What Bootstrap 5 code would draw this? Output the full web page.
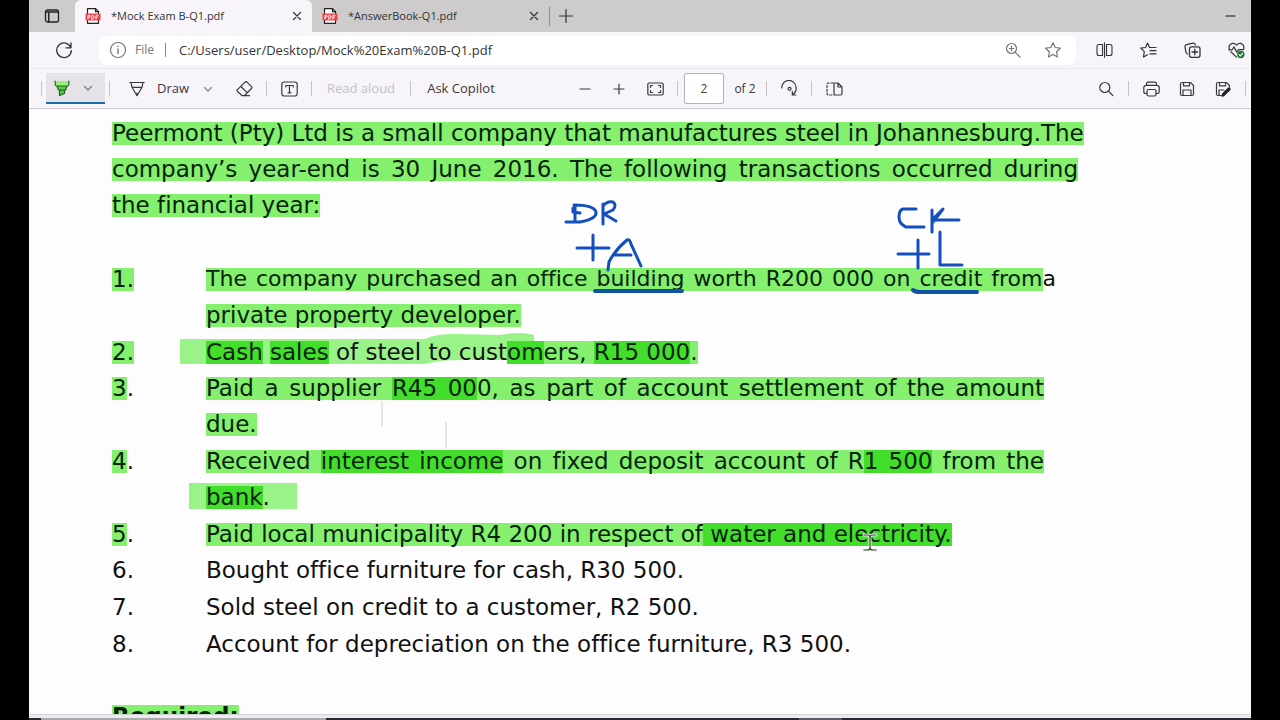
<!DOCTYPE html>
<html lang="en">
<head>
<meta charset="utf-8">
<meta name="viewport" content="width=device-width, initial-scale=1">
<title>Mock Exam B-Q1.pdf</title>
<link href="https://cdn.jsdelivr.net/npm/bootstrap@5.3.0/dist/css/bootstrap.min.css" rel="stylesheet">
<style>
  body { background: #000; font-family: "Open Sans", "Noto Sans", sans-serif; font-size: 12px; color: #333; }
  .browser { margin: 0 29px; background: #f7f5fa; }
  svg { display: block; fill: none; stroke: currentColor; stroke-width: 1.2; stroke-linecap: round; stroke-linejoin: round; flex: none; }
  button { background: none; border: 0; padding: 0; color: inherit; }

  .tab-strip { height: 32px; background: #cdcbcc; }
  .strip-btn { width: 46px; }
  .tab-item { width: 237px; padding: 0 7px 0 10px; gap: 10px; font-size: 11px; color: #333; }
  .tab-item a { color: inherit; }
  .tab-item.current { background: #f7f5fa; border-radius: 6px 6px 0 0; }
  .tab-sep { width: 1px; height: 19px; background: #8d8b8d; }

  .address-row { height: 37px; border-bottom: 1px solid #eceaee; }
  .reload { width: 70px; }
  .address-box { height: 29px; background: #fff; border-radius: 8px; padding: 0 15px 0 10px; margin-right: 12px; }
  .address-box input { border: 0; outline: 0; padding: 1px 0 0; background: none; font-size: 13px; color: #333; min-width: 0; }
  .address-icons { gap: 24px; color: #77757a; }
  .file-chip { color: #77757a; font-size: 12px; gap: 8px; }
  .file-chip .tab-sep { height: 14px; margin: 0 13px 0 3px; }
  .address-tools { gap: 12px; }
  .slot { width: 32px; height: 32px; }
  .overrun { margin-right: -1px; }

  .pdf-bar { height: 40px; border-bottom: 1px solid #cfcdd2; padding: 0 1px 0 8px; color: #3a383c; font-size: 13px; }
  .rule { width: 1px; height: 15px; background: #c4c2c7; margin: 0 6px; flex: none; }
  .rule.tight { margin: 0 4px; }
  .pen-btn { width: 59px; height: 31px; background: #e5e3e7; border-bottom: 2px solid #1b6aa5; padding: 0 12px 0 8px; }
  .draw-btn { width: 98px; padding: 0 7px; margin-left: 8px; margin-right: 8px; gap: 12px; }
  .aloud-btn { width: 86px; color: #c3c1c6; }
  .ask-btn { width: 88px; margin-right: 64px; }
  .zoom-in { margin: 0 4px 0 2px; }
  .page-box { width: 40px; height: 31px; border: 1px solid #b5b3b8; border-radius: 2px; text-align: center; font-size: 12px; color: #444; background: #fff; }
  .page-total { width: 42px; font-size: 12px; }

  .sheet { background: #fdfdfd; color: #111; font-family: "DejaVu Sans", Verdana, sans-serif; font-variant-ligatures: none; font-size: 23px; line-height: 36px; padding: 6px 0 0 83px; z-index: 0; }
  .sheet p, .sheet ol { margin: 0; padding: 0; }
  .sheet .intro { width: 966px; margin-bottom: 38px; }
  .ln { display: block; white-space: nowrap; }
  .full { text-align-last: justify; }
  .ol-num { width: 94px; flex: none; }
  .ol-text { width: 838px; }
  .ol-text .wide { width: 850px; font-size: 22px; }
  .one-more { margin-bottom: 1px; }
  .hl { background: linear-gradient(#85ef6e, #85ef6e) 0 2px / 100% 23px no-repeat; }
  .hl2 { background: linear-gradient(#43de2b, #43de2b) 0 2px / 100% 23px no-repeat; }
  .hl, .hl2 { color: #06240a; }
  .sheet .required { margin-top: 36px; font-weight: 700; }
  .layer { left: 0; top: 0; pointer-events: none; }
  .bands { z-index: -1; }

  .scroll-strip { height: 4px; background: #ececef; border-top: 1px solid #d2d3d8; }
  .task-strip { height: 2px; background: #262a33; }
  .task-strip .lit { width: 285px; margin-left: 12px; background: #aaa9ad; }
  .task-strip .dim { width: 43px; margin-left: 473px; background: #5d5f68; }
</style>
</head>
<body>
<div class="browser d-flex flex-column vh-100 overflow-hidden">
  <div class="tab-strip d-flex align-items-center flex-shrink-0">
    <button class="strip-btn d-flex justify-content-center" aria-label="Tab actions">
      <svg width="16" height="16" viewBox="0 0 16 16"><rect x="1.500" y="2" width="13" height="12" rx="2" stroke="#222" stroke-width="1.300"/><path d="M2 4h12M4.700 5v9" stroke="#222" stroke-width="1.500"/></svg>
    </button>
    <div class="tab-item current d-flex align-items-center h-100">
      <svg width="16" height="16" viewBox="0 0 16 16"><path d="M2.500.7h8l3 3v11.600h-11z" fill="#fff" stroke="#222"/><path d="M10.500.7v3h3" stroke="#222"/><rect x=".5" y="5.500" width="15" height="7" rx="1" fill="#e8434b" stroke="none"/><path d="M3 11V7.300h1.200q1 0 1 1t-1 1H3M6.800 11V7.300h.8q1.400 0 1.400 1.800T7.600 11zM11 11V7.300h2M11 9.200h1.700" stroke="#fff" stroke-width=".9"/></svg>
      <a href="#" class="text-decoration-none flex-grow-1">*Mock Exam B-Q1.pdf</a>
      <button aria-label="Close tab"><svg width="16" height="16" viewBox="0 0 16 16"><path d="M4.500 4.500l7 7M11.500 4.500l-7 7"/></svg></button>
    </div>
    <div class="tab-item d-flex align-items-center h-100">
      <svg width="16" height="16" viewBox="0 0 16 16"><path d="M2.500.7h8l3 3v11.600h-11z" fill="#fff" stroke="#222"/><path d="M10.500.7v3h3" stroke="#222"/><rect x=".5" y="5.500" width="15" height="7" rx="1" fill="#e8434b" stroke="none"/><path d="M3 11V7.300h1.200q1 0 1 1t-1 1H3M6.800 11V7.300h.8q1.400 0 1.400 1.800T7.600 11zM11 11V7.300h2M11 9.200h1.700" stroke="#fff" stroke-width=".9"/></svg>
      <a href="#" class="text-decoration-none flex-grow-1">*AnswerBook-Q1.pdf</a>
      <button aria-label="Close tab"><svg width="16" height="16" viewBox="0 0 16 16"><path d="M4.500 4.500l7 7M11.500 4.500l-7 7"/></svg></button>
    </div>
    <span class="tab-sep"></span>
    <button class="slot d-flex align-items-center justify-content-center" aria-label="New tab"><svg width="16" height="16" viewBox="0 0 16 16"><path d="M8 1.500v13M1.500 8h13"/></svg></button>
    <button class="slot ms-auto me-1 d-flex align-items-center justify-content-center" aria-label="Minimize"><svg width="12" height="12" viewBox="0 0 12 12"><path d="M1 6h9" stroke="#111"/></svg></button>
  </div>

  <div class="address-row d-flex align-items-center flex-shrink-0">
    <button class="reload d-flex justify-content-center" aria-label="Refresh"><svg width="18" height="18" viewBox="0 0 18 18"><path d="M15.800 6.600A7.300 7.300 0 1 0 16.300 9.600M16 1.800v5h-5" stroke-width="1.300"/></svg></button>
    <div class="address-box d-flex align-items-center flex-grow-1">
      <div class="file-chip d-flex align-items-center">
        <svg width="18" height="18" viewBox="0 0 18 18"><circle cx="9" cy="9" r="7.500"/><path d="M9 8v4.500M9 5.300v.2" stroke-width="1.400"/></svg>
        <label for="url">File</label><span class="tab-sep"></span>
      </div>
      <input id="url" class="flex-grow-1" value="C:/Users/user/Desktop/Mock%20Exam%20B-Q1.pdf">
      <div class="address-icons d-flex">
        <svg width="16" height="16" viewBox="0 0 16 16"><circle cx="6.500" cy="6.500" r="5"/><path d="M10.300 10.300l4.700 4.700M6.500 4.300v4.400M4.300 6.500h4.400"/></svg>
        <svg width="16" height="16" viewBox="0 0 16 16"><path d="M8 .8l2.200 4.700 5.200.7-3.800 3.600.9 5.200L8 12.500 3.500 15l.9-5.200L.6 6.200l5.200-.7z"/></svg>
      </div>
    </div>
    <div class="address-tools d-flex overrun">
      <button class="slot d-flex align-items-center justify-content-center" aria-label="Split screen"><svg width="17" height="16" viewBox="0 0 17 16"><path d="M6.500 2.500H3q-2 0-2 2v7q0 2 2 2h3.500zM10.500 2.500H14q2 0 2 2v7q0 2-2 2h-3.500zM8.500.8v14.400" stroke-width="1.100"/></svg></button>
      <button class="slot d-flex align-items-center justify-content-center" aria-label="Favorites"><svg width="17" height="16" viewBox="0 0 17 16"><path d="M9.500 5.500L7.500 1 5.600 5.500.8 6.200l3.500 3.500-.8 5.300 4-2.200M9.500 5.500h6.500M10 8.700h6M10 11.900h6"/></svg></button>
      <button class="slot d-flex align-items-center justify-content-center" aria-label="Collections"><svg width="17" height="16" viewBox="0 0 17 16"><path d="M3.500 11.800q-1.300-.2-1.500-1.500L1 4.800q-.3-1.800 1.500-2.200l6.500-1.400q1.800-.3 2.300 1.800"/><rect x="5.500" y="4.800" width="10.500" height="10.500" rx="2" stroke-width="1.300"/><path d="M10.800 7.200v5.600M8 10h5.600" stroke-width="1.300"/></svg></button>
      <button class="slot d-flex align-items-center justify-content-center" aria-label="Browser essentials"><svg width="17" height="17" viewBox="0 0 17 17"><path d="M1.500 7.500q-1.200-2.700.6-4.800Q5.200 0 8.500 3q3.300-3 6.300-.3 1.800 2 .7 4.800M2.800 9.800l5.700 5.300M.8 7.800h3.400l1.800-2.900 2.800 5.300 1.800-2.500h5"/><circle cx="12.800" cy="12.500" r="3.700" fill="#1f7a35" stroke="none"/><path d="M11.200 12.700l1.200 1.100 2-2.300" stroke="#fff"/></svg></button>
    </div>
  </div>

  <div class="pdf-bar d-flex align-items-center flex-shrink-0">
    <span class="rule tight"></span>
    <button class="pen-btn d-flex align-items-center justify-content-between" aria-label="Highlight"><svg width="16" height="16" viewBox="0 0 16 16"><path d="M1.500 1v5h13V1z" fill="#9af07f" stroke="none"/><path d="M3 6l1.500 4h7L13 6zM5.500 10.500v5l5-2v-3z" fill="#4fcf45" stroke="none"/><path d="M1.200 1v3.500q0 1.500 1.500 1.500h10.600q1.500 0 1.500-1.500V1M3 6.200l1.300 3.300q.2.700 1 .7h5.400q.8 0 1-.7L13 6.200M5.500 10.500v5l5-2v-3" stroke="#25651f"/></svg>
      <svg width="10" height="10" viewBox="0 0 10 10"><path d="M1.500 3.500L5 7l3.500-3.500" stroke="#777"/></svg></button>
    <span class="rule tight"></span>
    <button class="draw-btn d-flex align-items-center"><svg width="16" height="16" viewBox="0 0 16 16"><path d="M.8 1.500h14.400M2 1.500l1 4.800h10l1-4.800M3 6.300l5 8.400 5-8.400M8 12v2.500"/></svg><span>Draw</span><svg class="ms-auto" width="10" height="10" viewBox="0 0 10 10"><path d="M1.500 3.500L5 7l3.500-3.500" stroke="#888"/></svg></button>
    <button class="slot d-flex align-items-center justify-content-center" aria-label="Erase"><svg width="17" height="16" viewBox="0 0 17 16"><path d="M1.500 8.700L9 1.200q1-.9 2 0l4.500 4.500q.8.900 0 1.800L8.500 14.500H6L1.500 10.500q-.8-.9 0-1.800zM5 5.500l6.200 6.200M6 14.700h7.500"/></svg></button>
    <span class="rule"></span>
    <button class="slot d-flex align-items-center justify-content-center" aria-label="Add text"><svg width="17" height="16" viewBox="0 0 17 16"><rect x=".8" y="1" width="15.400" height="14" rx="2.500"/><path d="M4.800 6V4.500h7.400V6M8.500 4.500v7.300M7 11.800h3"/></svg></button>
    <span class="rule"></span>
    <button class="aloud-btn" disabled>Read aloud</button>
    <span class="rule"></span>
    <button class="ask-btn">Ask Copilot</button>
    <button class="slot d-flex align-items-center justify-content-center" aria-label="Zoom out"><svg width="12" height="12" viewBox="0 0 12 12"><path d="M1 6h10"/></svg></button>
    <button class="slot zoom-in d-flex align-items-center justify-content-center" aria-label="Zoom in"><svg width="12" height="12" viewBox="0 0 12 12"><path d="M1 6h10M6 1v10"/></svg></button>
    <button class="slot d-flex align-items-center justify-content-center" aria-label="Fit to page"><svg width="17" height="14" viewBox="0 0 17 14"><rect x=".8" y="1" width="15.400" height="12" rx="1.500"/><path d="M3.500 5.500v-2h2M11.500 3.500h2v2M13.500 8.500v2h-2M5.500 10.500h-2v-2"/></svg></button>
    <span class="rule"></span>
    <input class="page-box" aria-label="Page" value="2"><span class="page-total text-center">of 2</span>
    <span class="rule ms-0"></span>
    <button class="slot d-flex align-items-center justify-content-center" aria-label="Rotate"><svg width="17" height="17" viewBox="0 0 17 17"><path d="M.8 8A7 7 0 0 1 15 7q.9 5-3.500 7.500M11.300 11.300v3.700h3.500"/><circle cx="8.500" cy="8.800" r="1.500"/></svg></button>
    <span class="rule"></span>
    <button class="slot d-flex align-items-center justify-content-center" aria-label="Page view"><svg width="17" height="14" viewBox="0 0 17 14"><path d="M7 1H2.500Q1 1 1 2.500v9Q1 13 2.500 13H7" stroke-dasharray="2 1.800"/><path d="M8 1h4l4 4v6.500q0 1.500-1.500 1.500H8zM12 1v4h4"/></svg></button>
    <button class="slot ms-auto d-flex align-items-center justify-content-center" aria-label="Search"><svg width="16" height="16" viewBox="0 0 16 16"><circle cx="6.800" cy="6.500" r="5"/><path d="M10.500 10.200l4.300 4.300"/></svg></button>
    <span class="rule"></span>
    <button class="slot d-flex align-items-center justify-content-center" aria-label="Print"><svg width="17" height="16" viewBox="0 0 17 16"><path d="M3.500 4.300V3q0-1.800 1.800-1.800h6.400q1.800 0 1.800 1.800v1.300M4 12.500H2.500q-1.700 0-1.700-1.700V6.500q0-2.200 2.200-2.200h11q2.200 0 2.200 2.200v4.300q0 1.700-1.700 1.700H13"/><rect x="4" y="8.500" width="9" height="6.500" rx="1.500"/></svg></button>
    <button class="slot ms-1 d-flex align-items-center justify-content-center" aria-label="Save"><svg width="16" height="16" viewBox="0 0 16 16"><path d="M3 1.500h8.500l3 3V13q0 1.500-1.500 1.500H3Q1.500 14.500 1.500 13V3Q1.500 1.500 3 1.500zM4.500 1.500v3.300h6V1.500M4 14.500V9h8v5.500"/></svg></button>
    <button class="slot ms-1 d-flex align-items-center justify-content-center" aria-label="Save as"><svg width="17" height="16" viewBox="0 0 17 16"><path d="M7 14.500H3Q1.500 14.500 1.500 13V3Q1.500 1.500 3 1.500h8.500l3 3V6M4.500 1.500v3.300h6V1.500M4 14.500V9h5"/><path d="M8.500 13.500l5.500-5.500" stroke="#222" stroke-width="3.200"/><path d="M7 15.200l1.500-.5" stroke="#222"/></svg></button>
    <span class="rule me-1"></span>
  </div>

  <main class="sheet position-relative flex-grow-1 overflow-hidden">
    <svg class="layer bands position-absolute" width="1222" height="605" viewBox="29 109 1222 605">
      <g fill="#9af388" stroke="none">
        <path d="M180 339H425Q435 334 455 334L500 335Q520 331 534 335V360H460Q440 360 425 364H180z"/>
        <path d="M189 483H297V509H189z"/>
      </g>
      <path d="M382 402v24M446 422v26" stroke="#cfe0c4"/>
    </svg>
    <p class="intro">
      <span class="ln full"><span class="hl">Peermont (Pty) Ltd is a small company that manufactures steel in Johannesburg.The</span></span>
      <span class="ln full"><span class="hl">company’s year-end is 30 June 2016. The following transactions occurred during</span></span>
      <span class="ln"><span class="hl">the financial year:</span></span>
    </p>
    <ol class="list-unstyled">
      <li class="d-flex one-more"><span class="ol-num"><span class="hl">1.</span></span><div class="ol-text"><span class="ln full wide"><span class="hl">The company purchased an office building worth R200 000 on credit from</span>a</span><span class="ln"><span class="hl">private property developer.</span></span></div></li>
      <li class="d-flex"><span class="ol-num"><span class="hl">2.</span></span><div class="ol-text"><span class="ln"><span class="hl2">Cash</span> <span class="hl2">sales</span> of steel to cust<span class="hl"><span class="hl2">om</span>ers, <span class="hl2">R15 000</span>.</span></span></div></li>
      <li class="d-flex one-more"><span class="ol-num"><span class="hl">3</span>.</span><div class="ol-text"><span class="ln full"><span class="hl">Paid a supplier <span class="hl2">R45 00</span>0, as part of account settlement of the amount</span></span><span class="ln"><span class="hl">due.</span></span></div></li>
      <li class="d-flex one-more"><span class="ol-num"><span class="hl">4</span>.</span><div class="ol-text"><span class="ln full"><span class="hl">Received <span class="hl2">interest income</span> on fixed deposit account of R<span class="hl2">1 500</span> from the</span></span><span class="ln"><span class="hl2">bank</span>.</span></div></li>
      <li class="d-flex"><span class="ol-num"><span class="hl">5</span>.</span><div class="ol-text"><span class="ln"><span class="hl">Paid local municipality R4 200 in respect of<span class="hl2"> water and electricity.</span></span></span></div></li>
      <li class="d-flex one-more"><span class="ol-num">6.</span><div class="ol-text"><span class="ln">Bought office furniture for cash, R30 500.</span></div></li>
      <li class="d-flex one-more"><span class="ol-num">7.</span><div class="ol-text"><span class="ln">Sold steel on credit to a customer, R2 500.</span></div></li>
      <li class="d-flex"><span class="ol-num">8.</span><div class="ol-text"><span class="ln">Account for depreciation on the office furniture, R3 500.</span></div></li>
    </ol>
    <p class="required"><span class="hl text-decoration-underline">Required:</span></p>

    <svg class="layer position-absolute" width="1222" height="605" viewBox="29 109 1222 605">
      <g stroke="#1450bd" stroke-width="3">
        <path d="M575 206V221M566 222H580Q597 219 596 212 594 205 574 205M573 208V212L580 213M603 204V224M603 206Q607 201 613 202 617 205 613 210L604 214 616 221"/>
        <path d="M593 235V260M577 248H609M608 270L609 262Q615 250 627 240 630 239 631 244L641 266M615 255H631"/>
        <path d="M916 209H903Q899 210 899 217 899 224 906 227H924M932 210V232M932 220L943 209 933 222M934 220H959"/>
        <path d="M918 240V268M898 254H929M940 232V265H962"/>
        <path d="M595 291H682M913 290Q915 292 920 292H977" stroke="#1052a5" stroke-width="4"/>
      </g>
      <path d="M864 535h4q2 0 2 3v10q0 2-3 2h-3M876 535h-4q-2 0-2 3v10q0 2 3 2h3" stroke="#e8f5e4" stroke-width="3"/>
      <path d="M864 535h4q2 0 2 3v10q0 2-3 2h-3M876 535h-4q-2 0-2 3v10q0 2 3 2h3" stroke="#364333"/>
    </svg>
  </main>
  <div class="scroll-strip flex-shrink-0"></div>
  <div class="task-strip d-flex flex-shrink-0"><span class="lit"></span><span class="dim"></span></div>
</div>
<script src="https://cdn.jsdelivr.net/npm/bootstrap@5.3.0/dist/js/bootstrap.bundle.min.js"></script>
</body>
</html>
